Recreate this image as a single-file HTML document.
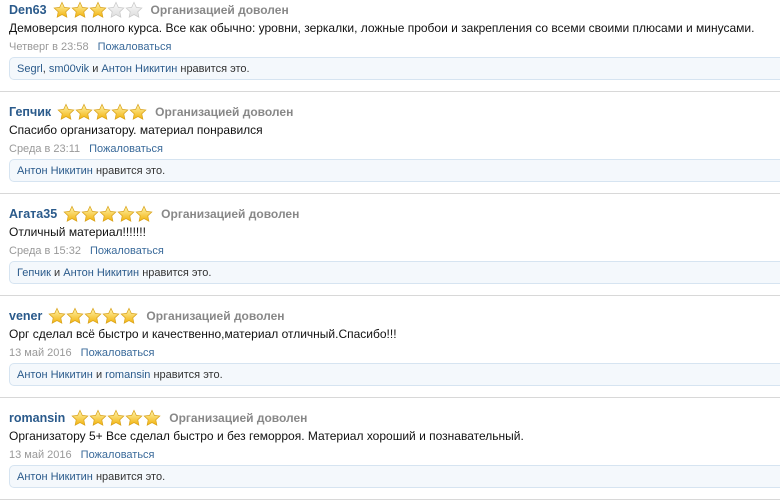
<!DOCTYPE html><html><head><meta charset="utf-8"><style>
body{margin:0;width:780px;height:473px;overflow:hidden;background:#fff;font-family:"Liberation Sans",Arial,sans-serif;font-size:12px;}
.b{position:absolute;left:0;width:780px;height:102px;border-bottom:1px solid #d8d8d8;}
.h{position:absolute;left:9px;top:12px;height:18px;display:flex;align-items:center;white-space:nowrap}
.n{font-weight:bold;color:#2a5a8b;font-size:12.5px}
.st{display:inline-flex;margin:0 8px 0 6px}
.st svg{width:18px;height:18px}
.o{color:#888;font-weight:bold;font-size:12px}
.t{position:absolute;left:9px;top:32px;color:#111}
.d{position:absolute;left:9px;top:52px;color:#999;font-size:11px}
.d a{color:#3a6a9a;margin-left:9px}
.l{position:absolute;left:9px;top:68px;width:800px;height:21px;background:#f4f8fc;border:1px solid #d6e4f1;border-radius:5px;font-size:11px;line-height:22px;padding-left:7px;color:#333}
.l a{color:#2a5a8b}
</style></head><body>
<svg width="0" height="0" style="position:absolute"><defs>
<linearGradient id="g" x1="0" y1="0" x2="0" y2="1"><stop offset="0" stop-color="#fff6b0"/><stop offset="1" stop-color="#f2b20c"/></linearGradient>
<linearGradient id="e" x1="0" y1="0" x2="0" y2="1"><stop offset="0" stop-color="#fafafa"/><stop offset="1" stop-color="#ddd"/></linearGradient>
<symbol id="s" viewBox="0 0 20 20"><path d="M10 1.5l2.6 5.6 6.1.7-4.5 4.2 1.2 6-5.4-3-5.4 3 1.2-6L1.3 7.8l6.1-.7z"/></symbol>
</defs></svg>
<div id="c"></div>
<script>
var F='<svg><use href="#s" fill="url(#g)" stroke="#d9a21a" stroke-width="0.8"/></svg>',E='<svg><use href="#s" fill="url(#e)" stroke="#c8c8c8" stroke-width="0.8"/></svg>';
var d=[["Den63",3,"Демоверсия полного курса. Все как обычно: уровни, зеркалки, ложные пробои и закрепления со всеми своими плюсами и минусами.","Четверг в 23:58",'<a>Segrl</a>, <a>sm00vik</a> и <a>Антон Никитин</a> нравится это.'],
["Гепчик",5,"Спасибо организатору. материал понравился","Среда в 23:11",'<a>Антон Никитин</a> нравится это.'],
["Агата35",5,"Отличный материал!!!!!!!","Среда в 15:32",'<a>Гепчик</a> и <a>Антон Никитин</a> нравится это.'],
["vener",5,"Орг сделал всё быстро и качественно,материал отличный.Спасибо!!!","13 май 2016",'<a>Антон Никитин</a> и <a>romansin</a> нравится это.'],
["romansin",5,"Организатору 5+ Все сделал быстро и без геморроя. Материал хороший и познавательный.","13 май 2016",'<a>Антон Никитин</a> нравится это.']];
var h='';d.forEach(function(r,i){var s='';for(var k=0;k<5;k++)s+=k<r[1]?F:E;
h+='<div class="b" style="top:'+(i*102-11)+'px"><div class="h"><span class="n">'+r[0]+'</span><span class="st">'+s+'</span><span class="o">Организацией доволен</span></div><div class="t">'+r[2]+'</div><div class="d">'+r[3]+'<a>Пожаловаться</a></div><div class="l">'+r[4]+'</div></div>';});
document.getElementById('c').innerHTML=h;
</script>
</body></html>
